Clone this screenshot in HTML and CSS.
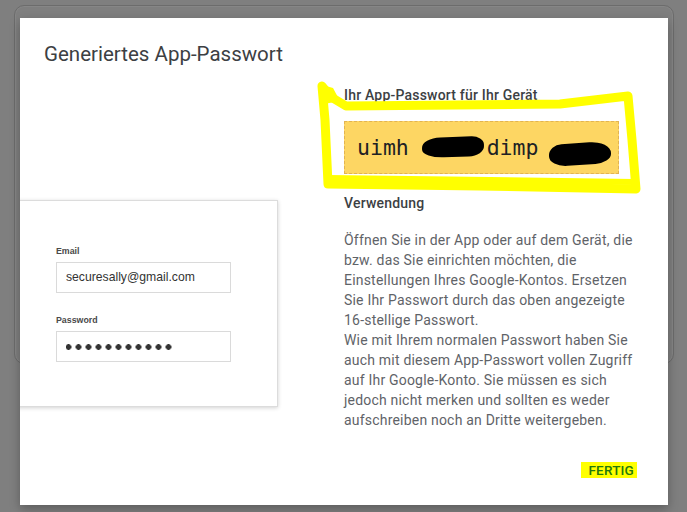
FILE: index.html
```html
<!DOCTYPE html>
<html lang="de">
<head>
    <meta charset="UTF-8">
    <meta name="viewport" content="width=device-width, initial-scale=1.0">
    <title>Generiertes App-Passwort</title>
    <link rel="stylesheet" href="styles.css">
</head>
<body>
    <!-- Seite hinter dem Dialog (abgedunkelt) -->
    <div class="page-card"></div>

    <!-- Dialog -->
    <div class="dialog">
        <h1 class="dialog-title">Generiertes App-Passwort</h1>

        <div class="dialog-body">
            <div class="preview">
                <div class="login-card">
                    <label class="login-label">Email</label>
                    <div class="login-input">securesally@gmail.com</div>

                    <label class="login-label login-label-pw">Password</label>
                    <div class="login-input"><span class="dots"></span></div>
                </div>
            </div>

            <div class="info">
                <div class="info-label">Ihr App-Passwort für Ihr Gerät</div>
                <div class="pw-box">uimh <span class="hide hide-a"></span> dimp <span class="hide hide-b"></span></div>

                <div class="info-heading">Verwendung</div>
                <p class="info-text">
                    Öffnen Sie in der App oder auf dem Gerät, die bzw. das Sie einrichten möchten, die
                    Einstellungen Ihres Google-Kontos. Ersetzen Sie Ihr Passwort durch das oben angezeigte
                    16-stellige Passwort.<br>
                    Wie mit Ihrem normalen Passwort haben Sie auch mit diesem App-Passwort vollen Zugriff
                    auf Ihr Google-Konto. Sie müssen es sich jedoch nicht merken und sollten es weder
                    aufschreiben noch an Dritte weitergeben.
                </p>
            </div>
        </div>

        <div class="dialog-footer">
            <button class="btn-done" type="button">FERTIG</button>
        </div>
    </div>

    <!-- Markierung mit Textmarker -->
    <svg class="marker" width="687" height="512" viewBox="0 0 687 512">
        <path d="M322 86 L331 97 L346 106 L560 104 L628 96 L632 140 L636 189 L480 186 L328 184 L325 120 Z"
              fill="none" stroke="#ffff00" stroke-width="9" stroke-linejoin="round" stroke-linecap="round"/>
        <path d="M319 84 L333 88 L340 101 L324 104 Z" fill="#ffff00"/>
        <path d="M329 178 L634 182" fill="none" stroke="#ffff00" stroke-width="6" stroke-linecap="round"/>
    </svg>
</body>
</html>
```

FILE: styles.css
```css
body {
    margin: 0;
    padding: 5px 13px 0 14px;
    height: 512px;
    box-sizing: border-box;
    overflow: hidden;
    background-color: #7f7f7f;
    font-family: Roboto, "Noto Sans", Arial, sans-serif;
}

.page-card {
    height: 357px;
    border: 1px solid #6c6c6c;
    border-radius: 10px;
    box-shadow: inset 0 0 0 1px rgba(255, 255, 255, 0.06);
}

.dialog {
    position: absolute;
    left: 20px;
    top: 18px;
    width: 648px;
    height: 487px;
    background-color: #fff;
    box-shadow: 0 4px 10px rgba(0, 0, 0, 0.28);
    display: flex;
    flex-direction: column;
    overflow: hidden;
}

.dialog-title {
    margin: 22px 0 0 24px;
    font-size: 20.5px;
    line-height: 28px;
    font-weight: 400;
    color: #3c4043;
}

.dialog-body {
    display: grid;
    grid-template-columns: 324px 296px;
    margin-top: 17px;
}

/* Vorschau links */
.preview {
    padding-top: 115px;
}

.login-card {
    width: 270px;
    height: 207px;
    margin-left: -12px;
    box-sizing: border-box;
    padding: 45px 0 0 47px;
    background-color: #fff;
    border: 1px solid #dcdcdc;
    box-shadow: 0 1px 4px rgba(0, 0, 0, 0.18);
    font-family: "Liberation Sans", Arial, sans-serif;
}

.login-label {
    display: block;
    font-size: 8.8px;
    line-height: 11px;
    font-weight: 600;
    color: #4a4a4a;
    margin-bottom: 5px;
}

.login-label-pw {
    margin-top: 22px;
}

.login-input {
    width: 175px;
    height: 31px;
    box-sizing: border-box;
    border: 1px solid #dadada;
    padding-left: 9px;
    font-size: 12.2px;
    line-height: 29px;
    color: #333;
}

.dots {
    display: inline-block;
    width: 106px;
    height: 6px;
    vertical-align: middle;
    background: radial-gradient(circle, #333 2.6px, transparent 3.1px) -2.5px 0 / 10px 6px repeat-x;
}

/* Infos rechts */
.info-label {
    font-size: 14px;
    line-height: 20px;
    font-weight: 500;
    letter-spacing: 0.2px;
    color: #3c4043;
}

.pw-box {
    width: 275px;
    height: 53px;
    box-sizing: border-box;
    margin-top: 16px;
    padding: 11px 0 0 12px;
    background-color: #fdd663;
    border: 1px dashed #e2b352;
    font-family: "DejaVu Sans Mono", monospace;
    font-size: 21.5px;
    line-height: 29px;
    color: #202124;
    white-space: nowrap;
}

.hide {
    display: inline-block;
    background-color: #000;
}

.hide-a {
    width: 62px;
    height: 20px;
    margin-right: -10px;
    vertical-align: -2px;
    border-radius: 30% 20% 25% 35% / 50% 40% 50% 40%;
    transform: rotate(-2deg);
}

.hide-b {
    width: 62px;
    height: 22px;
    margin-left: -2px;
    vertical-align: -10px;
    border-radius: 20% 35% 25% 30% / 45% 55% 40% 50%;
    transform: skewY(-4deg);
}

.info-heading {
    margin-top: 19px;
    font-size: 14px;
    line-height: 20px;
    font-weight: 500;
    letter-spacing: 0.2px;
    color: #3c4043;
}

.info-text {
    margin: 17px 0 0;
    font-size: 14px;
    line-height: 20px;
    letter-spacing: 0.2px;
    color: #5f6368;
}

.dialog-footer {
    margin-top: auto;
    display: flex;
    justify-content: flex-end;
    padding: 0 31px 27px 0;
}

.btn-done {
    border: none;
    padding: 0 3px 0 7px;
    background-color: #ffff00;
    font-family: Roboto, Arial, sans-serif;
    font-size: 13.5px;
    line-height: 16px;
    font-weight: 500;
    letter-spacing: 0.2px;
    color: #23780c;
    cursor: pointer;
}

.marker {
    position: absolute;
    left: 0;
    top: 0;
    pointer-events: none;
}
```
